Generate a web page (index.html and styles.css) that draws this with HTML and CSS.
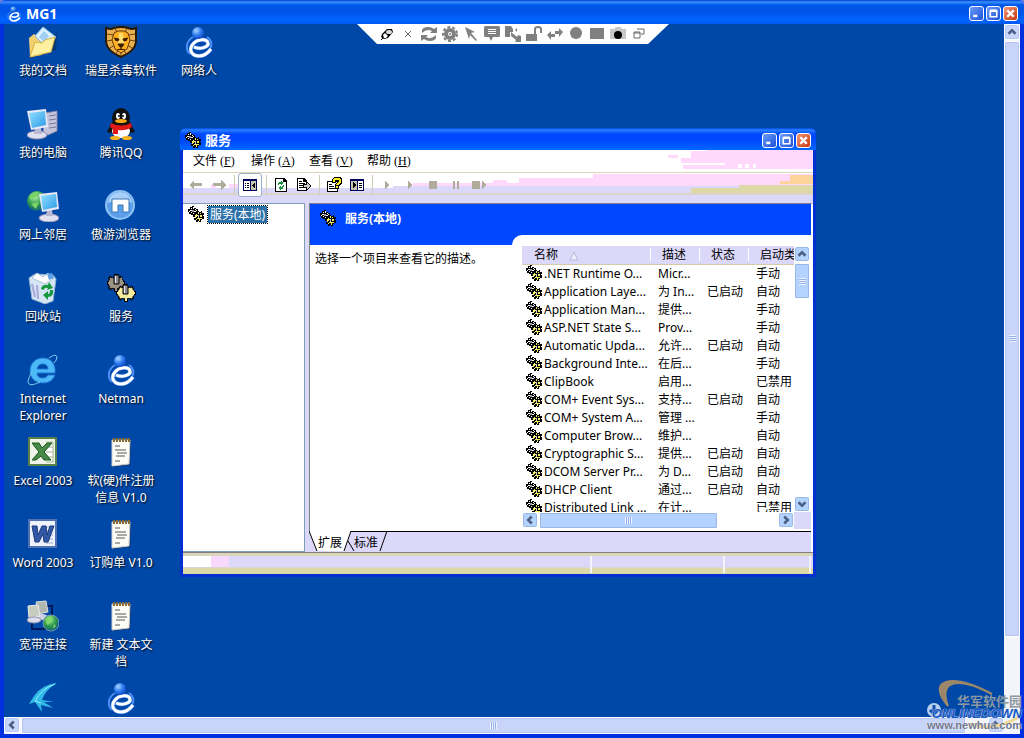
FILE: index.html
```html
<!DOCTYPE html>
<html lang="zh-CN">
<head>
    <meta charset="UTF-8">
    <meta name="viewport" content="width=device-width, initial-scale=1.0">
    <title>MG1</title>
    <link rel="stylesheet" href="styles.css">
</head>
<body>
    <!-- 公用图标 -->
    <svg class="defs" aria-hidden="true">
        <defs>
            <linearGradient id="glass" x1="0" y1="0" x2="1" y2="1">
                <stop offset="0" stop-color="#8fe0ff"/><stop offset="1" stop-color="#2f9be8"/>
            </linearGradient>
            <radialGradient id="ball" cx="0.35" cy="0.3" r="0.8">
                <stop offset="0" stop-color="#a8d4ff"/><stop offset="0.5" stop-color="#2f7df0"/><stop offset="1" stop-color="#0a3fc0"/>
            </radialGradient>
            <radialGradient id="earth" cx="0.4" cy="0.3" r="0.8">
                <stop offset="0" stop-color="#b0f0a0"/><stop offset="0.5" stop-color="#2a9a4a"/><stop offset="1" stop-color="#0c4a90"/>
            </radialGradient>
            <symbol id="gears" viewBox="0 0 32 32">
                <path d="M11 2v18M2 11h18M4 5l13 12M17 5L4 17" stroke="#000" stroke-width="4"/>
                <ellipse cx="11" cy="11" rx="8" ry="6" fill="#9c9484" stroke="#000"/>
                <path d="M11 3v16M3 11h16M5 6l12 11M17 6L5 16" stroke="#9c9484" stroke-width="2"/>
                <path d="M9 3h5v9H9z" fill="#8c8c94" stroke="#000"/><path d="M10.500 4v7" stroke="#e8e8f0"/>
                <path d="M21 12v18M11 21h20M14 15l14 12M28 15L14 27" stroke="#000" stroke-width="4"/>
                <ellipse cx="21" cy="21" rx="9" ry="6" fill="#f4eca0" stroke="#000"/>
                <path d="M21 13v16M12 21h18M15 16l12 10M27 16L15 26" stroke="#f4eca0" stroke-width="2"/>
                <path d="M18 13h5v9h-5z" fill="#8c8c94" stroke="#000"/><path d="M19.500 14v7" stroke="#e8e8f0"/>
            </symbol>
            <symbol id="gears-small" viewBox="0 0 16 16">
                <g shape-rendering="crispEdges">
                    <path d="M4 0h2v2h2v1h2v2H9v3H7v2H5V9H3V8H1V6H0V3h2V1h2z" fill="#000"/>
                    <path d="M3 2h1v1H3zM5 1h1v2H5zM7 3h1v1H7zM2 4h2v1H2zM6 5h2v1H6zM3 6h1v1H3zM5 7h1v1H5zM8 4h1v1H8zM1 5h1v1H1z" fill="#fff"/>
                    <path d="M4 4h2v2H4z" fill="#999"/>
                    <path d="M9 5h2v1h2V5h1v2h2v2h-1v1h1v3h-2v1h-1v2h-2v-1h-1v1H8v-2H6v-2h1v-1H5V9h2V7h2z" fill="#000"/>
                    <path d="M8 8h1v1H8zM10 6h1v2h-1zM12 7h1v1h-1zM7 9h2v2H8v1H7zM12 9h2v2h-2zM9 12h4v1H9zM8 13h1v1H8zM11 13h1v2h-1zM13 12h1v1h-1zM9 9h1v1H9z" fill="#f8f060"/>
                    <path d="M10 9h1v3h-1z" fill="#ccc"/>
                </g>
            </symbol>
            <symbol id="netman" viewBox="0 0 32 32">
                <path d="M10 11C3 15 2 24 7 28M24 11c6 4 5 10 2 13" fill="none" stroke="#4c90f8" stroke-width="2"/>
                <path d="M11 21c6 3 15 0 14-4-1-5-11-4-15 1-5 6-1 12 6 12 5 0 9-3 12-7" fill="none" stroke="#3f86f8" stroke-width="4"/>
                <path d="M11 21c6 3 15 0 14-4-1-5-11-4-15 1-5 6-1 12 6 12 5 0 9-3 12-7" fill="none" stroke="#fff" stroke-width="3"/>
                <circle cx="15" cy="7" r="6" fill="url(#ball)"/>
            </symbol>
            <symbol id="notepad" viewBox="0 0 32 32">
                <path d="M9 5h17l-1 24-17 2z" fill="#222" opacity="0.5"/>
                <path d="M7 4h18l-1 24-17 2z" fill="#fdfdf8" stroke="#ccc"/>
                <path d="M8 4h17" stroke="#8a6a30" stroke-width="4" stroke-dasharray="2 1"/>
                <path d="M10 10h5M10 14h11M12 17h10M11 20h9M10 25h5" stroke="#555"/>
            </symbol>
            <symbol id="up" viewBox="0 0 16 16"><path d="M4 10l4-4 4 4" fill="none" stroke="#4d6185" stroke-width="3"/></symbol>
            <symbol id="down" viewBox="0 0 16 16"><path d="M4 6l4 4 4-4" fill="none" stroke="#4d6185" stroke-width="3"/></symbol>
            <symbol id="left" viewBox="0 0 16 16"><path d="M10 4L6 8l4 4" fill="none" stroke="#4d6185" stroke-width="3"/></symbol>
            <symbol id="right" viewBox="0 0 16 16"><path d="M6 4l4 4-4 4" fill="none" stroke="#4d6185" stroke-width="3"/></symbol>
            <symbol id="min" viewBox="0 0 16 16"><path d="M4 11h5" stroke="#fff" stroke-width="3"/></symbol>
            <symbol id="max" viewBox="0 0 16 16"><path d="M4 5h8v7H4zM4 4h8" fill="none" stroke="#fff" stroke-width="2"/></symbol>
            <symbol id="close" viewBox="0 0 16 16"><path d="M4 4l8 8M12 4l-8 8" stroke="#fff" stroke-width="3"/></symbol>
        </defs>
    </svg>

    <div class="frame">
        <header class="titlebar">
            <svg class="title-icon"><use href="#netman"/></svg>
            <h1>MG1</h1>
            <div class="caption">
                <button aria-label="最小化"><svg><use href="#min"/></svg></button>
                <button aria-label="最大化"><svg><use href="#max"/></svg></button>
                <button class="red" aria-label="关闭"><svg><use href="#close"/></svg></button>
            </div>
        </header>

        <div class="middle">
            <main class="desktop">
                <div class="icons">
                    <a class="item" href="#"><svg viewBox="0 0 32 32">
                        <path d="M5 13l10-3 15-2-1 16-20 6-4-4z" fill="#123" opacity="0.4"/>
                        <path d="M2 12l5-4 4 2 4 2v17L3 31z" fill="#f0d070"/>
                        <path d="M8 10L16 1l13 10-9 11z" fill="#d8f0ff" stroke="#88b8e0"/>
                        <path d="M12 11l5-6 5 5-5 6z" fill="#9fd0f4"/>
                        <path d="M3 31l5-15 7 1 3-3 10-3-4 15z" fill="#fdf0a0" stroke="#d8b040"/>
                    </svg><span>我的文档</span></a>
                    <a class="item" href="#"><svg viewBox="0 0 32 32">
                        <path d="M1 2q5 2 8 0 7-2 14 0 4 2 8 0v14q-1 9-15 15Q2 25 1 16z" fill="#e8b050" stroke="#2a1a00" stroke-width="2"/>
                        <path d="M2 8l6 1M2 15l6-1M5 22l5-3M30 8l-6 1M30 15l-6-1M27 22l-5-3M10 2l2 5M22 2l-2 5M16 26v4M11 28l2-4M21 28l-2-4" stroke="#6a4008"/>
                        <path d="M9 7l4-2h6l4 2 2 7-3 9-6 4-6-4-3-9z" fill="#ffb020" stroke="#6a3800"/>
                        <path d="M14 7h4l1 11h-6z" fill="#ffdc70"/>
                        <path d="M9 12l5 1-1 2-3-1M23 12l-5 1 1 2 3-1M13 18h6l-2 3h-2zM16 21v2M12 24q4-2 8 0" stroke="#3a1c00" fill="#3a1c00"/>
                    </svg><span>瑞星杀毒软件</span></a>
                    <a class="item" href="#"><svg><use href="#netman"/></svg><span>网络人</span></a>

                    <a class="item" href="#"><svg viewBox="0 0 32 32">
                        <path d="M18 5l12-2v20l-9 4-5-2z" fill="#c4c4dc" stroke="#8888a8"/>
                        <path d="M22 8l7-1M22 12l7-1M22 16l7-1M22 20l7-1" stroke="#77779c"/>
                        <ellipse cx="10" cy="27" rx="10" ry="4" fill="#e0e0f0" stroke="#9090b0"/>
                        <path d="M8 20h6l1 6H7z" fill="#b8b8d0"/>
                        <path d="M0 3l19-2 2 18-17 3z" fill="#e8e8f8"/>
                        <path d="M2 5l16-2 1 14-14 3z" fill="url(#glass)"/>
                    </svg><span>我的电脑</span></a>
                    <a class="item" href="#"><svg viewBox="0 0 32 32">
                        <path d="M6 16L2 24l3 1 4-6zM26 16l4 8-3 1-4-6z" fill="#111"/>
                        <ellipse cx="16" cy="20" rx="11" ry="10" fill="#111"/>
                        <ellipse cx="16" cy="23" rx="9" ry="7" fill="#fff"/>
                        <ellipse cx="16" cy="10" rx="9" ry="10" fill="#111"/>
                        <ellipse cx="13" cy="8" rx="2" ry="3" fill="#fff"/><ellipse cx="19" cy="8" rx="2" ry="3" fill="#fff"/>
                        <circle cx="14" cy="8" r="1" fill="#000"/><circle cx="18" cy="8" r="1" fill="#000"/>
                        <ellipse cx="16" cy="13" rx="6" ry="2" fill="#f8a818"/>
                        <path d="M6 15q10 5 20 0l1 4q-6 4-14 3v4H8v-5l-3-2z" fill="#e01818"/>
                        <ellipse cx="10" cy="30" rx="5" ry="2" fill="#f8b020"/><ellipse cx="22" cy="30" rx="5" ry="2" fill="#f8b020"/>
                    </svg><span>腾讯QQ</span></a>
                    <i class="empty"></i>

                    <a class="item" href="#"><svg viewBox="0 0 32 32">
                        <circle cx="10" cy="11" r="10" fill="url(#earth)"/>
                        <path d="M3 6q5-5 9-4l-3 5-6 3zM12 12l-3 7-5-5z" fill="#7fd468"/>
                        <ellipse cx="22" cy="28" rx="10" ry="4" fill="#e0e0f0" stroke="#9090b0"/>
                        <path d="M20 20h5l1 6h-7z" fill="#b8b8d0"/>
                        <path d="M12 4l18-2 2 17-17 3z" fill="#e8e8f8"/>
                        <path d="M14 6l15-2 1 13-14 3z" fill="url(#glass)"/>
                    </svg><span>网上邻居</span></a>
                    <a class="item" href="#"><svg viewBox="0 0 32 32">
                        <circle cx="15" cy="15" r="15" fill="#8cc0f4"/>
                        <circle cx="15" cy="15" r="13" fill="#5c9fe8"/>
                        <path d="M3 13q12-6 24 0Q26 3 15 2 4 3 3 13z" fill="#a8d0f8"/>
                        <path d="M7 9h17v13h-6v-7h-5v7H7z" fill="#fff" stroke="#3878b8"/>
                    </svg><span>傲游浏览器</span></a>
                    <i class="empty"></i>

                    <a class="item" href="#"><svg viewBox="0 0 32 32">
                        <path d="M2 6l6-4 18 1 3 4-3 22-8 3L5 27z" fill="#d4e6f4" stroke="#90b0d0"/>
                        <path d="M5 6l5-5 6 4 5-4 5 6-8 5z" fill="#fff" stroke="#b0c4dc"/>
                        <path d="M20 2l5-1 2 5-5 2z" fill="#60a0e8"/>
                        <path d="M5 12l3 13M10 13l1 14" stroke="#a8a8d8" stroke-width="2"/>
                        <path d="M14 17q1-5 7-4l1-3 4 6-6 2 1-2q-4-1-4 2zM26 18q1 7-5 7v3l-5-5 5-4v3q2 0 2-4z" fill="#189840"/>
                    </svg><span>回收站</span></a>
                    <a class="item" href="#"><svg><use href="#gears"/></svg><span>服务</span></a>
                    <i class="empty"></i>

                    <a class="item" href="#"><svg viewBox="0 0 32 32">
                        <path d="M16 4C8 4 3 10 3 17s5 12 13 12c6 0 10-3 12-8h-7c-1 2-3 3-5 3-4 0-6-2-6-5h18C29 10 24 4 16 4zm-6 11c1-4 3-5 6-5s5 2 5 5z" fill="#4db8f8" stroke="#1c78d0" fill-rule="evenodd"/>
                        <path d="M22 4q7-5 8-1 0 3-3 6M5 18q-6 10-3 12 3 2 11-2" fill="none" stroke="#7cc8f0"/>
                    </svg><span>Internet Explorer</span></a>
                    <a class="item" href="#"><svg><use href="#netman"/></svg><span>Netman</span></a>
                    <i class="empty"></i>

                    <a class="item" href="#"><svg viewBox="0 0 32 32">
                        <path d="M2 2h27v27H2z" fill="#f0f4e8" stroke="#588048" stroke-width="2"/>
                        <path d="M19 6h7v20h-7M19 11h7M19 16h7M19 21h7" fill="#fff" stroke="#a0b890"/>
                        <path d="M5 7h7l3 5 5-5h5l-8 9 7 8h-7l-3-4-5 4H5l7-8z" fill="#488848" stroke="#185818"/>
                    </svg><span>Excel 2003</span></a>
                    <a class="item" href="#"><svg><use href="#notepad"/></svg><span>软(硬)件注册信息 V1.0</span></a>
                    <i class="empty"></i>

                    <a class="item" href="#"><svg viewBox="0 0 32 32">
                        <path d="M2 2h27v27H2z" fill="#eef2fc" stroke="#5070b0" stroke-width="2"/>
                        <path d="M19 9h7M19 13h7M19 17h7M19 21h7M19 25h7" stroke="#9aaed4"/>
                        <path d="M5 8h5l1 9 4-9h4l1 9 3-9h4l-6 16h-4l-1-8-4 8H8z" fill="#3458a8" stroke="#1c3878"/>
                    </svg><span>Word 2003</span></a>
                    <a class="item" href="#"><svg><use href="#notepad"/></svg><span>订购单 V1.0</span></a>
                    <i class="empty"></i>

                    <a class="item" href="#"><svg viewBox="0 0 32 32">
                        <path d="M5 18v11h16M18 6h7v12" fill="none" stroke="#001858" stroke-width="2"/>
                        <path d="M9 2l10-1 2 11-10 2z" fill="#b0b8b0" stroke="#dde0dd"/>
                        <ellipse cx="15" cy="17" rx="6" ry="3" fill="#d0d0e4"/>
                        <path d="M1 6l10-1 2 11-11 2z" fill="#c8ccc0" stroke="#eee"/>
                        <ellipse cx="7" cy="20" rx="7" ry="3" fill="#dcdcec" stroke="#9090b0"/>
                        <circle cx="24" cy="23" r="8" fill="url(#earth)" stroke="#7898b0"/>
                        <path d="M19 19q4-4 7-2l-2 5-4 3zM27 24l2 2-3 3z" fill="#80d868"/>
                    </svg><span>宽带连接</span></a>
                    <a class="item" href="#"><svg><use href="#notepad"/></svg><span>新建 文本文档</span></a>
                    <i class="empty"></i>

                    <a class="item" href="#" aria-label="飞鸟"><svg viewBox="0 0 32 32">
                        <path d="M30 1Q14 3 7 14l-5 8 6-2 7 10-1-7 12 3-9-6h10l-12-2Q18 8 30 1z" fill="#30b8e8"/>
                        <path d="M28 2Q14 7 8 19l6 2" fill="none" stroke="#90f0ff"/>
                    </svg></a>
                    <a class="item" href="#" aria-label="Netman"><svg><use href="#netman"/></svg></a>
                </div>

                <!-- 远程控制工具条 -->
                <nav class="remote">
                    <button aria-label="固定"><svg viewBox="0 0 16 16"><path d="M2 14l4-4" stroke="#000"/><path d="M3 8l5-5h5l1 3-5 6-4 1-3-2z" fill="#000"/><path d="M4 9l2-2 3 3-2 2H5z" fill="#fff"/><ellipse cx="10" cy="6" rx="3" ry="2" fill="#ddd"/></svg></button>
                    <button aria-label="断开"><svg viewBox="0 0 16 16"><path d="M5 5l6 6M11 5l-6 6" stroke="#666"/></svg></button>
                    <button aria-label="刷新"><svg viewBox="0 0 16 16"><path d="M1 7V4q1-3 6-3 4 0 6 2l3-2v6H9l2-2q-5-3-10 2zM15 9v3q-1 3-6 3-4 0-6-2l-3 2V9h7l-2 2q5 3 10-2z"/></svg></button>
                    <button aria-label="设置"><svg viewBox="0 0 16 16"><circle cx="8" cy="8" r="7" fill="none" stroke="#808080" stroke-width="2" stroke-dasharray="3 2"/><circle cx="8" cy="8" r="4" fill="none" stroke="#808080" stroke-width="4"/><circle cx="8" cy="8" r="1"/></svg></button>
                    <button aria-label="指针"><svg viewBox="0 0 16 16"><path d="M2 1l10 5-4 1 6 7-1 1-6-6-1 4z"/></svg></button>
                    <button aria-label="消息"><svg viewBox="0 0 16 16"><path d="M1 0h14q1 0 1 2v7q0 2-1 2H9l-2 4-2-4H1Q0 11 0 9V2q0-2 1-2z"/><path d="M4 3h8v1H4zM4 5h8v1H4zM4 7h8v1H4z" fill="#fff"/></svg></button>
                    <button aria-label="文件传输"><svg viewBox="0 0 16 16"><path d="M0 0h6l2 3v3H5v5H0z"/><path d="M6 6l6 5 1-2 3 1v6h-6l1-2-5-4zM10 4l2-2v4z"/></svg></button>
                    <button aria-label="解锁"><svg viewBox="0 0 16 16"><path d="M0 8h11v7H0z"/><path d="M9 8V3q0-2 3-2t3 2v4" fill="none" stroke="#808080" stroke-width="2"/></svg></button>
                    <button aria-label="切换"><svg viewBox="0 0 16 16"><path d="M0 9l4-4v3h4v3H4v3zM16 6l-4-4v3H8v3h4v3z"/></svg></button>
                    <button aria-label="录制"><svg viewBox="0 0 16 16"><circle cx="8" cy="7" r="6"/></svg></button>
                    <button aria-label="停止"><svg viewBox="0 0 16 16"><path d="M1 2h14v11H1z"/></svg></button>
                    <button aria-label="截图"><svg viewBox="0 0 16 16"><path d="M0 3h4l2-2h5l1 2h4v10H0z" fill="#c8c8c8"/><circle cx="8" cy="9" r="4" fill="#000"/></svg></button>
                    <button aria-label="还原"><svg viewBox="0 0 16 16"><path d="M6 3h7v5h-3M3 6h6v6H3zM3 7h6" fill="none" stroke="#666"/></svg></button>
                </nav>

                <!-- 服务窗口 -->
                <section class="window">
                    <header class="window-title">
                        <svg class="small"><use href="#gears-small"/></svg>
                        <h2>服务</h2>
                        <div class="caption">
                            <button aria-label="最小化"><svg><use href="#min"/></svg></button>
                            <button aria-label="最大化"><svg><use href="#max"/></svg></button>
                            <button class="red" aria-label="关闭"><svg><use href="#close"/></svg></button>
                        </div>
                    </header>

                    <div class="bars">
                        <svg class="bars-bg" viewBox="0 0 630 53" preserveAspectRatio="none" shape-rendering="crispEdges" aria-hidden="true">
                            <path d="M485 5h10v3h-10zM498 8h10v-7h16V0h106v19h-130v-4h42v-2h-44z" fill="#ffd8fc"/>
                            <path d="M555 14h4v4h-4zM562 14h4v4h-4zM570 14h3v4h-3z" fill="#fff"/>
                            <path d="M0 22h630" stroke="#dcd4b8"/>
                            <path d="M410 24h220v14H230v-5h80v-3h14v3h12v-5h74z" fill="#ffd8fc"/>
                            <path d="M28 34h5v4h-5zM46 34h12v4h-12z" fill="#ffd8fc"/>
                            <path d="M0 38h210v-2h420v17H0z" fill="#dcd8fa"/>
                            <path d="M508 38h48v-3h74v10H508z" fill="#dcd8a8"/>
                            <path d="M0 44h630" stroke="#dcd4c8" stroke-width="2"/>
                            <path d="M607 25h23v9h-33v-3h10z" fill="#ffd49c"/>
                        </svg>
                        <nav class="menu">
                            <button>文件<span>(<u>F</u>)</span></button>
                            <button>操作<span>(<u>A</u>)</span></button>
                            <button>查看<span>(<u>V</u>)</span></button>
                            <button>帮助<span>(<u>H</u>)</span></button>
                        </nav>
                        <div class="tools">
                            <button aria-label="后退"><svg viewBox="0 0 16 16"><path d="M1 8l5-5v3h8v3H6v4z" fill="#b0ac9c"/></svg></button>
                            <button aria-label="前进"><svg viewBox="0 0 16 16"><path d="M15 8l-5-5v3H2v3h8v4z" fill="#b0ac9c"/></svg></button>
                            <i class="sep"></i>
                            <button class="on" aria-label="显示控制台树"><svg viewBox="0 0 16 16"><path d="M1 2h14v12H1z" fill="#000058"/><path d="M2 4h6v9H2z" fill="#fff"/><path d="M9 4h5v9H9z" fill="#c8c4b0"/><path d="M3 6h1v1H3zM5 6h2v1H5zM3 8h1v1H3zM5 8h2v1H5zM3 10h1v1H3zM5 10h2v1H5zM13 5v7l-3-4z"/></svg></button>
                            <i class="sep"></i>
                            <button aria-label="刷新"><svg viewBox="0 0 16 16"><path d="M2 1h9l3 3v11H2z"/><path d="M3 2h7v3h3v9H3z" fill="#fff"/><path d="M5 8q0-3 3-3V4l3 2-3 2V7q-2 0-2 1zM11 8q0 4-3 4v1l-3-2 3-2v1q2 0 2-2z" fill="#189040"/></svg></button>
                            <button aria-label="导出列表"><svg viewBox="0 0 16 16"><path d="M1 1h7l3 3v10H1z"/><path d="M2 2h5v3h3v8H2z" fill="#fff"/><path d="M3 4h3v1H3zM3 6h6v1H3zM3 8h5v1H3zM3 10h5v1H3zM7 7h3V4l6 5-6 5v-3H7z"/><path d="M8 8h3V6l3 3-3 3v-2H8z" fill="#ccc"/></svg></button>
                            <i class="sep"></i>
                            <button aria-label="帮助"><svg viewBox="0 0 16 16"><path d="M1 4h11v11H1z"/><path d="M2 5h9v9H2z" fill="#fff"/><path d="M3 7h3v1H3zM3 9h5v1H3zM3 11h6v1H3zM6 2l2-2h6l2 2v4l-3 3v3H9V7l2-2V4h-1v2H6z"/><path d="M7 3l1-2h6l1 2v3l-3 2h-2V7l3-2V3H9v2H7zM10 9h2v2h-2z" fill="#f8e820"/></svg></button>
                            <button aria-label="显示操作窗格"><svg viewBox="0 0 16 16"><path d="M1 2h14v12H1z" fill="#000058"/><path d="M2 4h6v9H2z" fill="#c8c4b0"/><path d="M9 4h5v9H9z" fill="#fff"/><path d="M10 6h3v1h-3zM10 8h3v1h-3zM10 10h3v1h-3zM4 5v7l3-4z"/></svg></button>
                            <i class="sep"></i>
                            <button class="gray" aria-label="启动服务"><svg viewBox="0 0 16 16"><path d="M6 4v9l4-5z"/></svg></button>
                            <button class="gray" aria-label="恢复服务"><svg viewBox="0 0 16 16"><path d="M6 4v9l4-5z"/></svg></button>
                            <button class="gray" aria-label="停止服务"><svg viewBox="0 0 16 16"><path d="M4 4h8v8H4z"/></svg></button>
                            <button class="gray" aria-label="暂停服务"><svg viewBox="0 0 16 16"><path d="M5 4h2v8H5zM9 4h2v8H9z"/></svg></button>
                            <button class="gray" aria-label="重新启动服务"><svg viewBox="0 0 16 16"><path d="M1 4h8v8H1zM11 4v8l4-4z"/></svg></button>
                        </div>
                    </div>

                    <div class="panes">
                        <aside class="tree">
                            <svg class="small"><use href="#gears-small"/></svg>
                            <a href="#">服务(本地)</a>
                        </aside>
                        <div class="detail">
                            <div class="banner">
                                <svg class="small"><use href="#gears-small"/></svg>
                                <h3>服务(本地)</h3>
                            </div>
                            <div class="content">
                                <p class="hint">选择一个项目来查看它的描述。</p>
                                <div class="list">
                                    <div class="rows">
                                        <table>
                                            <thead>
                                                <tr><th class="c-name">名称<svg class="sort" viewBox="0 0 10 10"><path d="M1 9l4-8 4 8z" fill="#eeecff" stroke="#b8b4d0"/></svg></th><th class="c-desc">描述</th><th class="c-state">状态</th><th>启动类</th></tr>
                                            </thead>
                                            <tbody>
                                                <tr><td><svg class="small"><use href="#gears-small"/></svg>.NET Runtime O...</td><td>Micr...</td><td></td><td>手动</td></tr>
                                                <tr><td><svg class="small"><use href="#gears-small"/></svg>Application Laye...</td><td>为 In...</td><td>已启动</td><td>自动</td></tr>
                                                <tr><td><svg class="small"><use href="#gears-small"/></svg>Application Man...</td><td>提供...</td><td></td><td>手动</td></tr>
                                                <tr><td><svg class="small"><use href="#gears-small"/></svg>ASP.NET State S...</td><td>Prov...</td><td></td><td>手动</td></tr>
                                                <tr><td><svg class="small"><use href="#gears-small"/></svg>Automatic Upda...</td><td>允许...</td><td>已启动</td><td>自动</td></tr>
                                                <tr><td><svg class="small"><use href="#gears-small"/></svg>Background Inte...</td><td>在后...</td><td></td><td>手动</td></tr>
                                                <tr><td><svg class="small"><use href="#gears-small"/></svg>ClipBook</td><td>启用...</td><td></td><td>已禁用</td></tr>
                                                <tr><td><svg class="small"><use href="#gears-small"/></svg>COM+ Event Sys...</td><td>支持...</td><td>已启动</td><td>自动</td></tr>
                                                <tr><td><svg class="small"><use href="#gears-small"/></svg>COM+ System A...</td><td>管理 ...</td><td></td><td>手动</td></tr>
                                                <tr><td><svg class="small"><use href="#gears-small"/></svg>Computer Brow...</td><td>维护...</td><td></td><td>自动</td></tr>
                                                <tr><td><svg class="small"><use href="#gears-small"/></svg>Cryptographic S...</td><td>提供...</td><td>已启动</td><td>自动</td></tr>
                                                <tr><td><svg class="small"><use href="#gears-small"/></svg>DCOM Server Pr...</td><td>为 D...</td><td>已启动</td><td>自动</td></tr>
                                                <tr><td><svg class="small"><use href="#gears-small"/></svg>DHCP Client</td><td>通过...</td><td>已启动</td><td>自动</td></tr>
                                                <tr><td><svg class="small"><use href="#gears-small"/></svg>Distributed Link ...</td><td>在计...</td><td></td><td>已禁用</td></tr>
                                            </tbody>
                                        </table>
                                    </div>
                                    <div class="bar vertical sky">
                                        <button aria-label="向上"><svg><use href="#up"/></svg></button>
                                        <span class="thumb short"></span>
                                        <button class="end" aria-label="向下"><svg><use href="#down"/></svg></button>
                                    </div>
                                    <div class="bar horizontal sky">
                                        <button aria-label="向左"><svg><use href="#left"/></svg></button>
                                        <span class="thumb wide"></span>
                                        <button class="end" aria-label="向右"><svg><use href="#right"/></svg></button>
                                    </div>
                                    <i class="corner"></i>
                                </div>
                            </div>
                            <div class="tabs">
                                <svg class="tab-lines" viewBox="0 0 84 21" aria-hidden="true">
                                    <path d="M0 0l8 20h27l7-20z" fill="#fff"/>
                                    <path d="M0 0l8 20M35 20l7-20M39 10l6 10M71 20L78 0" fill="none" stroke="#000"/>
                                </svg>
                                <button>扩展</button>
                                <button>标准</button>
                            </div>
                        </div>
                    </div>

                    <footer class="status"><span></span><span></span><span></span></footer>
                </section>
            </main>

            <div class="bar vertical">
                <button aria-label="向上"><svg><use href="#up"/></svg></button>
                <span class="thumb tall"></span>
            </div>
        </div>

        <div class="bottom">
            <div class="bar horizontal">
                <button aria-label="向左"><svg><use href="#left"/></svg></button>
                <span class="thumb long"></span>
                <button class="end plain" aria-label="向右"><svg><use href="#right"/></svg></button>
            </div>
        </div>
    </div>

    <!-- 右下角水印 -->
    <div class="watermark">
        <svg viewBox="0 0 100 54" aria-hidden="true">
            <path d="M24 30C2 4 26-4 68 18 34 0 14 4 24 30z" fill="#9c8868" stroke="#9c8868" stroke-width="2"/>
            <path d="M46 48q26 8 50-8" fill="none" stroke="#f0d890" stroke-width="3"/>
            <circle cx="10" cy="34" r="7" fill="#b8d0f0"/><path d="M10 29v8M6 34l4 4 4-4" fill="none" stroke="#1050b0" stroke-width="3"/>
        </svg>
        <span class="wm-cn">华军软件园</span>
        <span class="wm-en">ONLINEDOWN</span>
        <span class="wm-url">www.newhua.com</span>
    </div>
</body>
</html>
```
FILE: styles.css
```css
* {
    box-sizing: border-box;
}
body {
    margin: 0;
    background: #6a7fe0;
    font-family: "Noto Sans", "Noto Sans CJK SC", sans-serif;
    font-size: 12px;
    line-height: 17px;
    color: #000;
}
h1, h2, h3, p {
    margin: 0;
}
button {
    border: 0;
    padding: 0;
    background: none;
    font: inherit;
    color: inherit;
}
a {
    color: inherit;
    text-decoration: none;
}
svg {
    display: block;
    flex: none;
}
.defs {
    position: absolute;
    width: 0;
    height: 0;
}
.small {
    width: 16px;
    height: 16px;
}

/* 外层窗口 */
.frame {
    display: flex;
    flex-direction: column;
    height: 100vh;
    padding: 0 4px 4px;
    background: #0030e0;
    border-radius: 6px 6px 0 0;
    overflow: hidden;
}
.titlebar {
    display: flex;
    align-items: center;
    gap: 4px;
    height: 24px;
    margin: 0 -4px;
    padding: 3px 6px 0;
    background: linear-gradient(#0040d0 0, #3a90ff 2px, #0058e8 5px, #0054e8 12px, #0064ff 20px, #0058f0 100%);
    color: #fff;
}
.titlebar h1 {
    font-size: 14px;
    flex: 1;
}
.title-icon {
    width: 16px;
    height: 16px;
}
.caption {
    display: flex;
    gap: 2px;
}
.caption button {
    width: 15px;
    height: 15px;
    border: 1px solid #fff;
    border-radius: 3px;
    background: linear-gradient(135deg, #6c9cf8, #1c50d8);
}
.caption .red {
    background: linear-gradient(135deg, #f09878, #c83810);
}
.caption svg {
    width: 13px;
    height: 13px;
}
.middle {
    display: flex;
    flex: 1;
    min-height: 0;
}
.desktop {
    position: relative;
    flex: 1;
    overflow: hidden;
    background: #0048a8;
}

/* 桌面图标 */
.icons {
    display: grid;
    grid-template-columns: repeat(3, 78px);
    grid-auto-rows: 82px;
    padding-top: 2px;
}
.item {
    display: flex;
    flex-direction: column;
    align-items: center;
    gap: 4px;
    color: #fff;
    text-align: center;
    text-shadow: 1px 1px 2px #000;
}
.item svg {
    width: 32px;
    height: 32px;
}
.item span {
    max-width: 72px;
}

/* 远程控制工具条 */
.remote {
    position: absolute;
    top: 0;
    left: 353px;
    display: flex;
    align-items: center;
    gap: 5px;
    height: 20px;
    padding: 0 22px;
    background: #fff;
    clip-path: polygon(0 0, 100% 0, 291px 100%, 20px 100%);
}
.remote svg {
    width: 16px;
    height: 16px;
    fill: #808080;
}

/* 服务窗口 */
.window {
    position: absolute;
    left: 176px;
    top: 104px;
    display: flex;
    flex-direction: column;
    width: 636px;
    height: 449px;
    padding: 0 3px 3px;
    background: #0030d0;
    border-radius: 6px 6px 0 0;
}
.window-title {
    display: flex;
    align-items: center;
    gap: 4px;
    height: 22px;
    margin: 0 -3px;
    padding: 2px 5px 0;
    background: linear-gradient(#0048e0 0, #2880ff 2px, #0048ff 6px, #0048ff 12px, #0068ff 100%);
    border-radius: 6px 6px 0 0;
    color: #fff;
}
.window-title h2 {
    flex: 1;
    font-size: 13px;
}
.bars {
    position: relative;
    background: #fff;
}
.bars-bg {
    position: absolute;
    left: 0;
    top: 0;
    width: 100%;
    height: 100%;
}
.menu {
    position: relative;
    display: flex;
    height: 22px;
    padding-left: 10px;
}
.menu button {
    width: 58px;
    text-align: left;
}
.menu span {
    margin-left: 3px;
    font-family: "Liberation Serif", serif;
}
.tools {
    position: relative;
    display: flex;
    align-items: center;
    height: 31px;
    padding: 0 0 5px 2px;
}
.tools button {
    padding: 3px;
    margin-right: 1px;
}
.tools .on {
    border: 1px solid #98b0c8;
    border-radius: 3px;
    background: #fff;
}
.tools svg {
    width: 16px;
    height: 16px;
    shape-rendering: crispEdges;
}
.gray svg {
    fill: #b0ac9c;
}
.sep {
    width: 1px;
    height: 20px;
    margin: 0 3px;
    background: #d0ccb8;
}
.panes {
    display: flex;
    flex: 1;
    gap: 4px;
    min-height: 0;
    background: #dcd8fa;
}
.tree {
    display: flex;
    align-items: flex-start;
    gap: 4px;
    width: 122px;
    padding: 2px 5px;
    background: #fff;
    border: 1px solid #7f9db9;
    border-left: 0;
}
.tree a {
    padding: 0 2px;
    background: #2c70a8;
    outline: 1px dotted #000;
    color: #fff;
}
.detail {
    display: flex;
    flex: 1;
    flex-direction: column;
    min-width: 0;
    border-top: 1px solid #808080;
    border-right: 2px solid #fff;
}
.banner {
    display: flex;
    gap: 9px;
    height: 41px;
    padding: 6px 10px;
    background: #0048ff;
    border-left: 1px solid #808080;
    color: #fff;
}
.banner h3 {
    font-size: 12px;
}
.content {
    display: flex;
    flex: 1;
    min-height: 0;
    background: #fff;
    border-left: 1px solid #808080;
}
.hint {
    flex: 1;
    padding: 5px;
}
.list {
    display: grid;
    grid-template: 1fr 17px / 1fr 17px;
    width: 299px;
    margin-top: -10px;
    padding: 11px 0 2px 10px;
    background: #fff;
    border-top-left-radius: 10px;
}
.rows {
    min-height: 0;
    overflow: hidden;
}
table {
    width: 100%;
    table-layout: fixed;
    border-collapse: collapse;
    white-space: nowrap;
}
th {
    height: 18px;
    padding: 0 0 0 10px;
    background: #dcd8fa linear-gradient(#fff, #fff) right 1px top 50% / 1px 13px no-repeat;
    border-bottom: 1px solid #d4cca8;
    font-weight: normal;
    text-align: left;
}
th:last-child {
    background-image: none;
}
.c-name {
    width: 130px;
    padding-left: 12px;
}
.c-desc, .c-state {
    width: 49px;
}
.sort {
    display: inline-block;
    width: 10px;
    height: 10px;
    margin-left: 11px;
    vertical-align: -2px;
}
td {
    height: 18px;
    padding: 0 0 0 6px;
}
td:first-child {
    padding-left: 4px;
}
td .small {
    float: left;
    margin-right: 2px;
}

/* 滚动条 */
.bar {
    display: flex;
    gap: 1px;
    background: #f4f4fb;
}
.vertical {
    flex-direction: column;
    width: 16px;
}
.horizontal {
    height: 17px;
}
.bar button {
    width: 16px;
    height: 16px;
    border: 1px solid #fff;
    border-radius: 3px;
    background: #c8d6fb;
    box-shadow: inset 0 0 0 1px #b4c8f4;
}
.bar svg {
    width: 14px;
    height: 14px;
}
.vertical .end {
    margin-top: auto;
}
.horizontal .end {
    margin-left: auto;
}
.bar .plain {
    margin-right: 16px;
}
.thumb {
    display: flex;
    border: 1px solid #fff;
    border-radius: 2px;
    box-shadow: inset 0 0 0 1px #b4c4f0;
    background: #c8d4fa;
}
.thumb::after {
    content: "";
    width: 7px;
    height: 7px;
    margin: auto;
    background: repeating-linear-gradient(90deg, #eef4ff 0, #eef4ff 1px, #98b0e8 1px, #98b0e8 2px);
}
.vertical .thumb::after {
    background: repeating-linear-gradient(#eef4ff 0, #eef4ff 1px, #98b0e8 1px, #98b0e8 2px);
}
.tall {
    height: 86%;
}
.long {
    width: 93%;
}
.short {
    height: 36px;
}
.wide {
    width: 179px;
}
.sky {
    background: #fff;
}
.sky button, .sky .thumb {
    background: #b4d4ff;
    box-shadow: inset 0 0 0 1px #98b8e8;
}
.corner {
    background: #dcd8fa;
}

/* 底部标签 */
.tabs {
    position: relative;
    display: flex;
    gap: 12px;
    height: 21px;
    padding-left: 9px;
    border-top: 1px solid #000;
}
.tabs button {
    position: relative;
}
.tab-lines {
    position: absolute;
    left: 0;
    top: -1px;
    width: 84px;
    height: 21px;
}
.status {
    display: flex;
    height: 22px;
    padding: 3px 2px 1px 0;
    border-top: 1px solid #808080;
    background: linear-gradient(#dcd4b8 0, #dcd4b8 3px, #dcd8fa 3px, #dcd8fa 14px, #dcd8a8 15px);
}
.status span {
    width: 133px;
    border-right: 2px solid #f4f4f8;
}
.status span:first-child {
    flex: 1;
    background: linear-gradient(#fff, #fff) 0 0 / 28px 11px no-repeat, linear-gradient(#f8d8fc, #f8d8fc) 28px 0 / 18px 11px no-repeat;
}
.status span:last-child {
    width: 86px;
}
.bottom {
    height: 17px;
}

/* 水印 */
.watermark {
    position: absolute;
    right: 0;
    bottom: 8px;
    width: 100px;
    padding-right: 2px;
    font-weight: bold;
    text-align: right;
    white-space: nowrap;
}
.watermark svg {
    position: absolute;
    left: 0;
    bottom: 0;
    width: 100px;
    height: 54px;
}
.watermark span {
    position: relative;
    display: block;
}
.wm-cn {
    font-size: 13px;
    line-height: 14px;
    color: #8c98a0;
}
.wm-en {
    font-family: "Liberation Sans", sans-serif;
    font-style: italic;
    font-size: 13px;
    line-height: 12px;
    color: #1858c0;
    text-shadow: 0 0 1px #d0e0ff, 0 0 1px #d0e0ff;
}
.wm-url {
    font-family: "Liberation Sans", sans-serif;
    font-size: 11px;
    line-height: 10px;
    color: #70788c;
    text-shadow: 0 0 1px #fff;
}
```
